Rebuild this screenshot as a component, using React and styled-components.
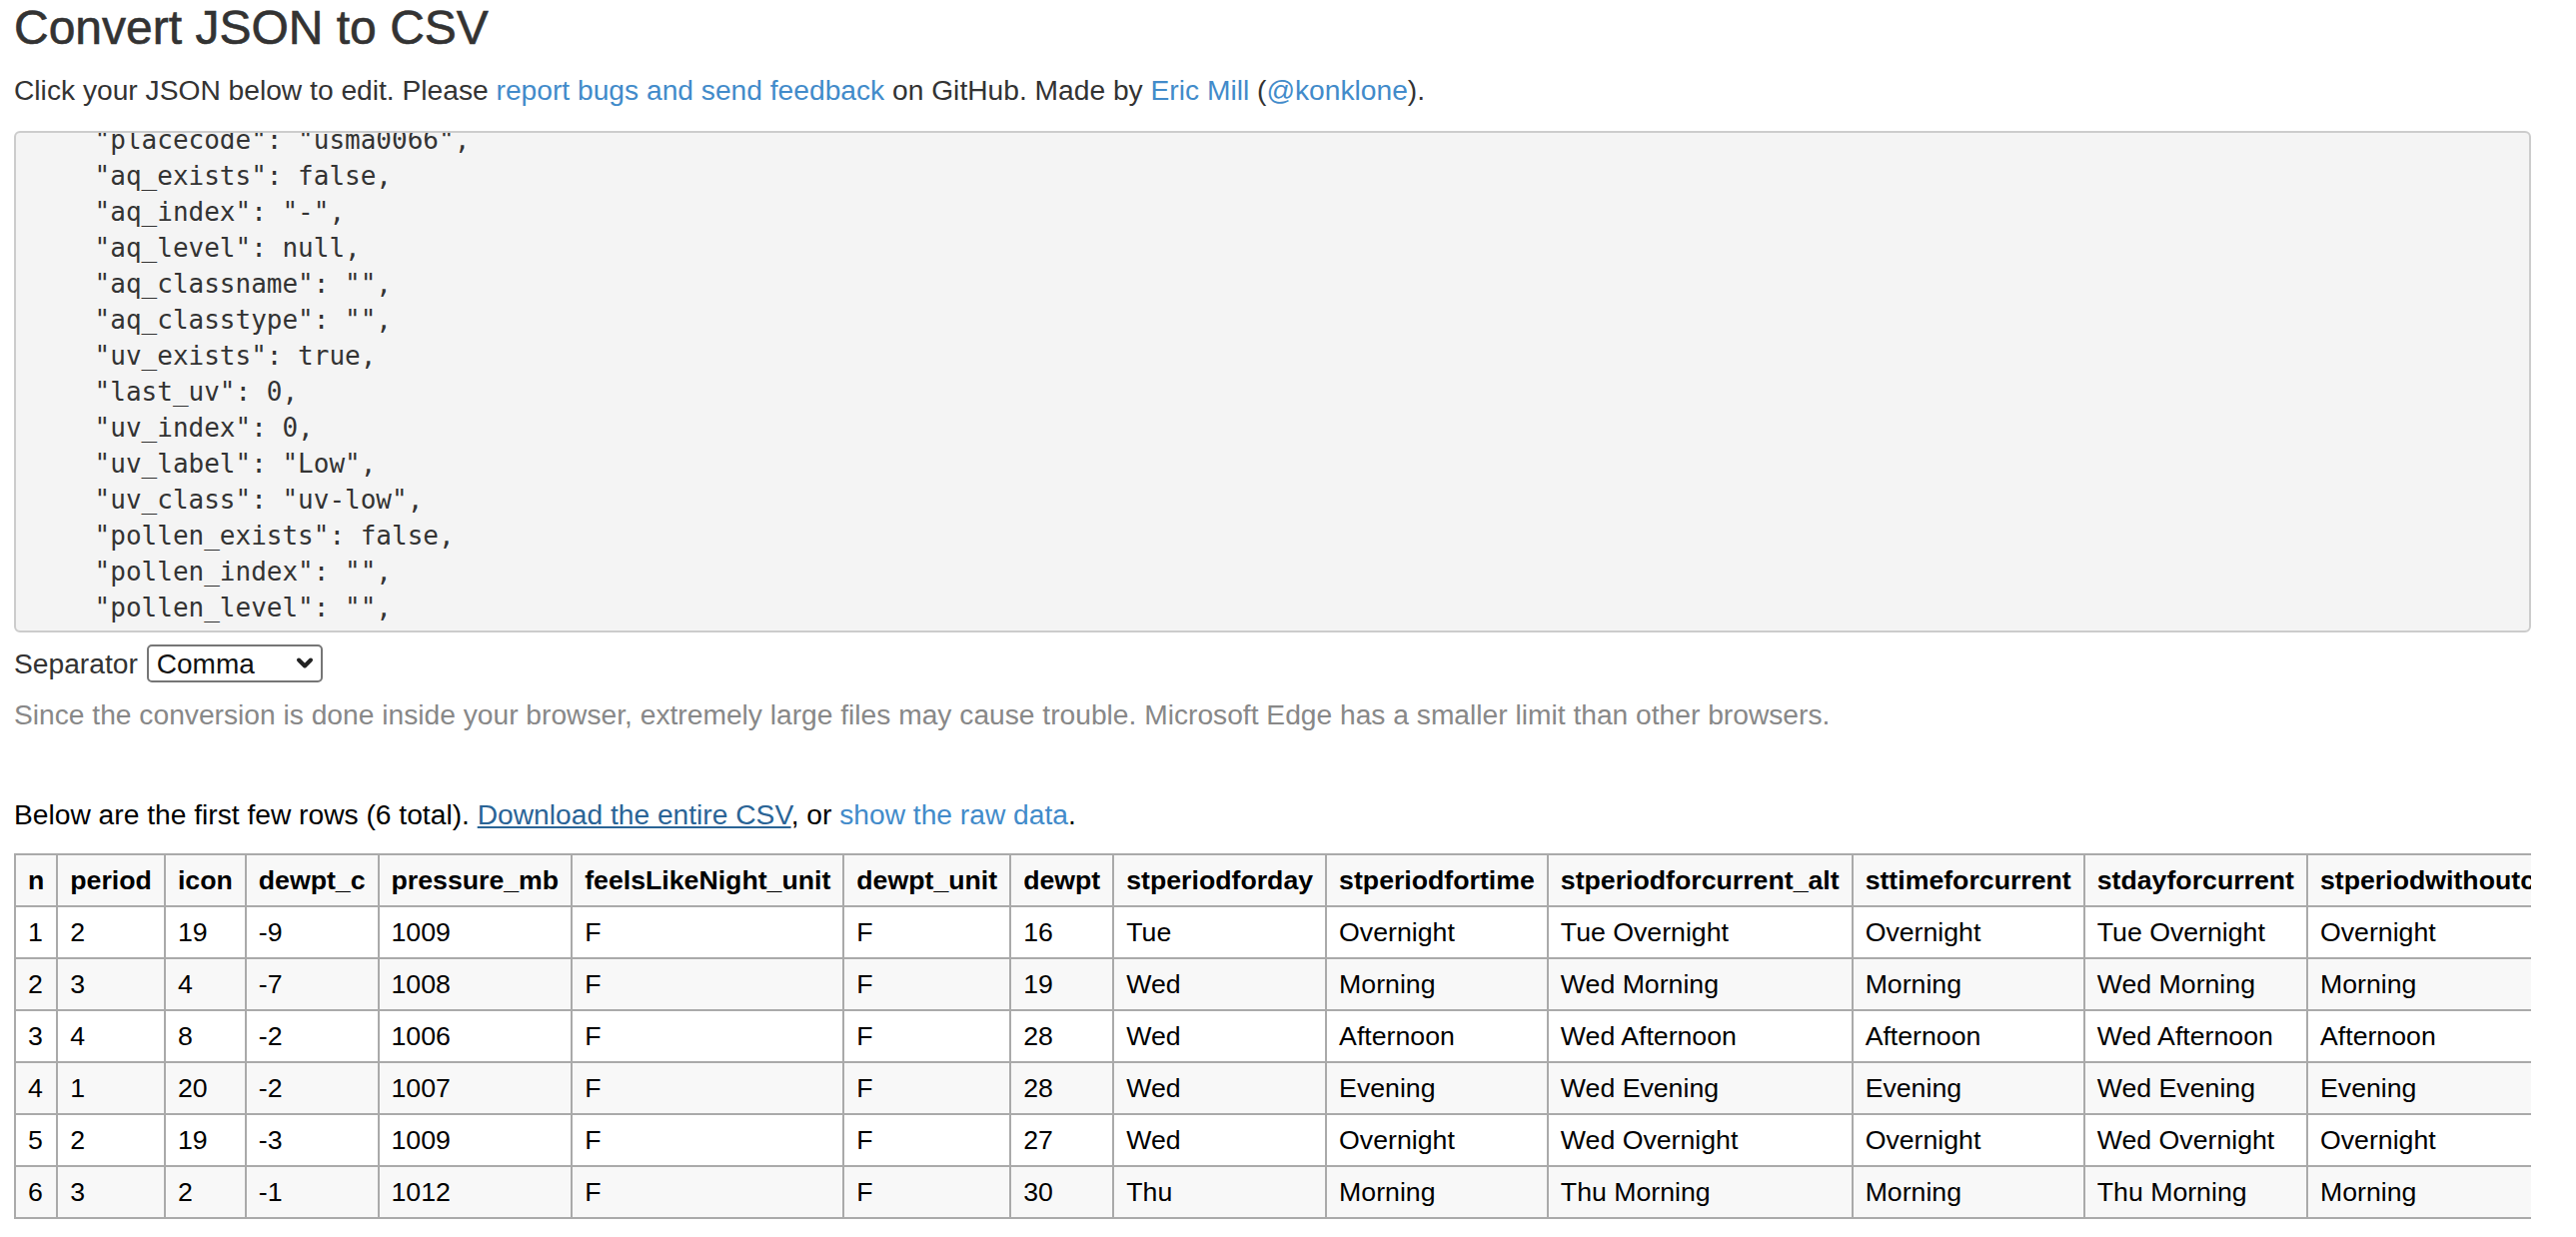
import React, { useLayoutEffect, useRef, useState } from 'react';
import styled, { createGlobalStyle } from 'styled-components';

const jsonLines = [
  '[',
  '  {',
  '    "n": 1,',
  '    "period": 2,',
  '    "icon": 19,',
  '    "dewpt_c": -9,',
  '    "pressure_mb": 1009,',
  '    "feelsLikeNight_unit": "F",',
  '    "dewpt_unit": "F",',
  '    "dewpt": 16,',
  '    "stperiodforday": "Tue",',
  '    "stperiodfortime": "Overnight",',
  '    "stperiodforcurrent_alt": "Tue Overnight",',
  '    "sttimeforcurrent": "Overnight",',
  '    "stdayforcurrent": "Tue Overnight",',
  '    "stperiodwithoutcurrent": "Overnight",',
  '    "placecode": "usma0066",',
  '    "aq_exists": false,',
  '    "aq_index": "-",',
  '    "aq_level": null,',
  '    "aq_classname": "",',
  '    "aq_classtype": "",',
  '    "uv_exists": true,',
  '    "last_uv": 0,',
  '    "uv_index": 0,',
  '    "uv_label": "Low",',
  '    "uv_class": "uv-low",',
  '    "pollen_exists": false,',
  '    "pollen_index": "",',
  '    "pollen_level": "",',
  '    "pollen_classname": "",',
  '    "pollen_classtype": ""',
  '  },',
  '  {',
  '    "n": 2,',
  '    "period": 3,',
  '    "icon": 4',
  '  }',
  ']',
];

const columns = [
  'n',
  'period',
  'icon',
  'dewpt_c',
  'pressure_mb',
  'feelsLikeNight_unit',
  'dewpt_unit',
  'dewpt',
  'stperiodforday',
  'stperiodfortime',
  'stperiodforcurrent_alt',
  'sttimeforcurrent',
  'stdayforcurrent',
  'stperiodwithoutcurrent',
  'placecode',
  'aq_exists',
];

const rows = [
  ['1', '2', '19', '-9', '1009', 'F', 'F', '16', 'Tue', 'Overnight', 'Tue Overnight', 'Overnight', 'Tue Overnight', 'Overnight', 'usma0066', 'false'],
  ['2', '3', '4', '-7', '1008', 'F', 'F', '19', 'Wed', 'Morning', 'Wed Morning', 'Morning', 'Wed Morning', 'Morning', 'usma0066', 'false'],
  ['3', '4', '8', '-2', '1006', 'F', 'F', '28', 'Wed', 'Afternoon', 'Wed Afternoon', 'Afternoon', 'Wed Afternoon', 'Afternoon', 'usma0066', 'false'],
  ['4', '1', '20', '-2', '1007', 'F', 'F', '28', 'Wed', 'Evening', 'Wed Evening', 'Evening', 'Wed Evening', 'Evening', 'usma0066', 'false'],
  ['5', '2', '19', '-3', '1009', 'F', 'F', '27', 'Wed', 'Overnight', 'Wed Overnight', 'Overnight', 'Wed Overnight', 'Overnight', 'usma0066', 'false'],
  ['6', '3', '2', '-1', '1012', 'F', 'F', '30', 'Thu', 'Morning', 'Thu Morning', 'Morning', 'Thu Morning', 'Morning', 'usma0066', 'false'],
];

const App = () => {
  const editorRef = useRef(null);
  const [json, setJson] = useState(jsonLines.join('\n'));
  const [separator, setSeparator] = useState('comma');

  // the editor is shown scrolled down to the "placecode" line
  useLayoutEffect(() => {
    const idx = jsonLines.findIndex((l) => l.includes('placecode'));
    if (editorRef.current) editorRef.current.scrollTop = 21 + idx * 36;
  }, []);

  return (
    <Page>
      <GlobalStyle />
      <Title>Convert JSON to CSV</Title>
      <Intro>
        Click your JSON below to edit. Please <Link href="#">report bugs and send feedback</Link> on GitHub. Made
        by <Link href="#">Eric Mill</Link> (<Link href="#">@konklone</Link>).
      </Intro>

      <Editor
        ref={editorRef}
        value={json}
        wrap="off"
        spellCheck={false}
        onChange={(e) => setJson(e.target.value)}
      />

      <SeparatorRow>
        <span>Separator</span>
        <SelectWrap>
          <SelectBox value={separator} onChange={(e) => setSeparator(e.target.value)}>
            <option value="comma">Comma</option>
            <option value="semicolon">Semicolon</option>
            <option value="tab">Tab</option>
          </SelectBox>
          <Chevron width="20" height="14" viewBox="0 0 20 14">
            <path d="M4 3.5 L10 9.5 L16 3.5" fill="none" stroke="#222" strokeWidth="4" strokeLinecap="round" strokeLinejoin="round" />
          </Chevron>
        </SelectWrap>
      </SeparatorRow>

      <Note>
        Since the conversion is done inside your browser, extremely large files may cause trouble. Microsoft Edge has a
        smaller limit than other browsers.
      </Note>

      <Summary>
        Below are the first few rows (6 total). <Link href="#" $dark>Download the entire CSV</Link>, or{' '}
        <Link href="#">show the raw data</Link>.
      </Summary>

      <TableWrap>
        <Table>
          <tbody>
            <Row $shade>
              {columns.map((c) => (
                <HeadCell key={c}>{c}</HeadCell>
              ))}
            </Row>
            {rows.map((r, i) => (
              <Row key={r[0]} $shade={i % 2 === 1}>
                {r.map((v, j) => (
                  <Cell key={j}>{v}</Cell>
                ))}
              </Row>
            ))}
          </tbody>
        </Table>
      </TableWrap>
    </Page>
  );
};

const GlobalStyle = createGlobalStyle`
  html, body {
    margin: 0;
    padding: 0;
    background: #fff;
    overflow: hidden;
  }
  body {
    font-family: "Liberation Sans", Arial, Helvetica, sans-serif;
    font-size: 28.2px;
    line-height: 40px;
    color: #333;
  }
`;

const Page = styled.div`
  padding: 0 45px 0 14px;
`;

const Title = styled.h1`
  margin: 2px 0 0;
  font-size: 48px;
  line-height: 52px;
  font-weight: 400;
  color: #333;
  -webkit-text-stroke: 0.6px #333;
`;

const Intro = styled.p`
  margin: 16px 0 21px;
`;

const Link = styled.a`
  color: ${(p) => (p.$dark ? '#2a6496' : '#428bca')};
  text-decoration: ${(p) => (p.$dark ? 'underline' : 'none')};
`;

const Editor = styled.textarea`
  display: block;
  box-sizing: border-box;
  width: 100%;
  height: 502px;
  margin: 0;
  padding: 10px 16px;
  border: 2px solid #cccccc;
  border-radius: 6px;
  background: #f4f4f4;
  font-family: "DejaVu Sans Mono", "Liberation Mono", monospace;
  font-size: 26px;
  line-height: 36px;
  color: #333;
  resize: none;
  overflow: hidden;
  white-space: pre;
  outline: none;
`;

const SeparatorRow = styled.div`
  display: flex;
  align-items: center;
  gap: 9px;
  height: 38px;
  margin-top: 12px;
`;

const SelectWrap = styled.div`
  position: relative;
  display: flex;
`;

const SelectBox = styled.select`
  appearance: none;
  box-sizing: border-box;
  width: 176px;
  height: 38px;
  margin: 0;
  padding: 0 0 0 8px;
  border: 2px solid #767676;
  border-radius: 5px;
  background: #fff;
  font-family: "Liberation Sans", Arial, sans-serif;
  font-size: 28px;
  color: #111;
`;

const Chevron = styled.svg`
  position: absolute;
  right: 8px;
  top: 12px;
  pointer-events: none;
`;

const Note = styled.p`
  margin: 12px 0 0;
  color: #888;
`;

const Summary = styled.p`
  margin: 60px 0 19px;
  color: #000;
`;

const TableWrap = styled.div`
  overflow: hidden;
`;

const Table = styled.table`
  border-collapse: collapse;
  font-family: "Liberation Sans", Arial, sans-serif;
  font-size: 26.7px;
  line-height: 36px;
  color: #000;
  white-space: nowrap;
`;

const Row = styled.tr`
  background: ${(p) => (p.$shade ? '#f8f8f8' : '#fff')};
`;

const HeadCell = styled.th`
  border: 2px solid #aaa;
  padding: 7px 12px;
  text-align: left;
  font-weight: 700;
`;

const Cell = styled.td`
  border: 2px solid #aaa;
  padding: 7px 12px;
  text-align: left;
`;

export default App;
